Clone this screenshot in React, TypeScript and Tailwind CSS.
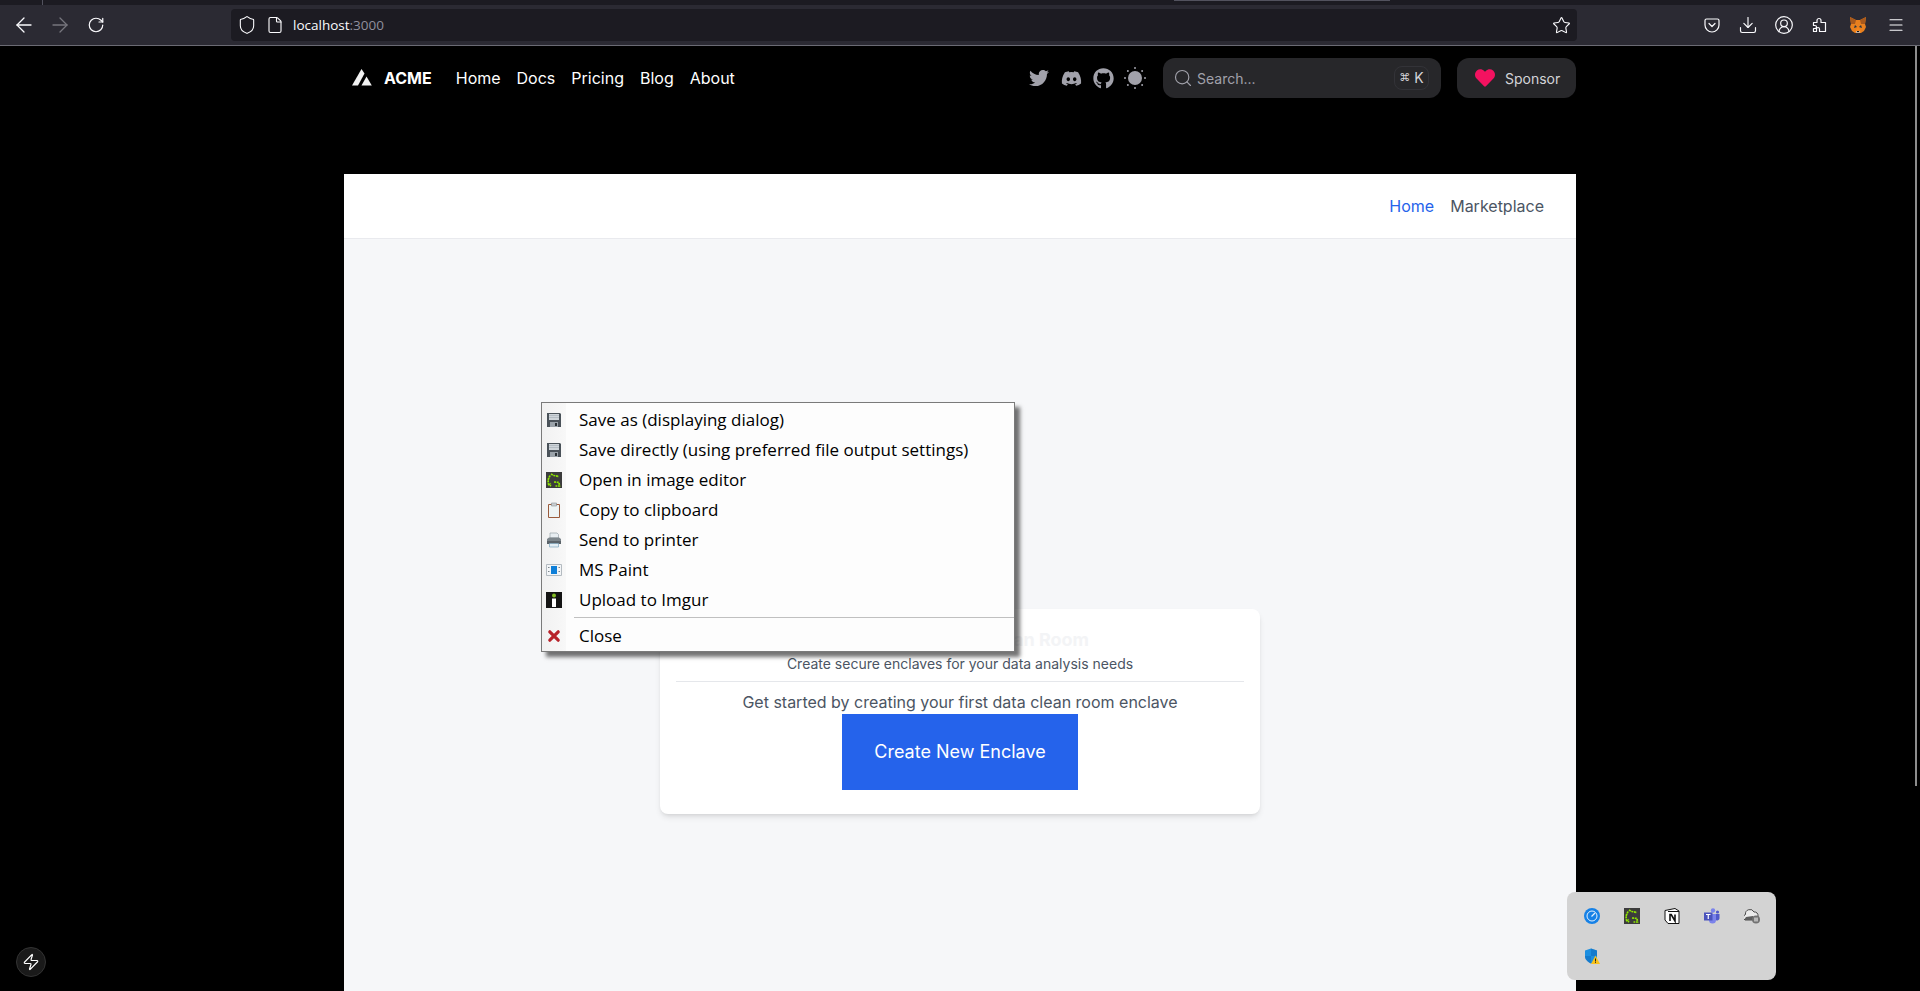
import { ArrowLeft, ArrowRight, CircleUserRound, Download, File, Menu, RotateCw, Search, Shield, Star, Zap } from 'lucide-react';
import { FaDiscord, FaGithub, FaHeart, FaTwitter } from 'react-icons/fa';

const navLinks = ['Home', 'Docs', 'Pricing', 'Blog', 'About'];

function PocketIcon() {
  return (
    <svg width="16" height="16" viewBox="0 0 16 16" fill="none" stroke="#fbfbfe" strokeWidth="1.2">
      <path d="M2.5 2h11A1.5 1.500 0 0 1 15 3.500V8a7 7 0 0 1-14 0V3.500A1.500 1.500 0 0 1 2.500 2z" />
      <path d="M5 6.500 8 9.500l3-3" strokeLinecap="round" strokeLinejoin="round" />
    </svg>
  );
}

function PuzzleIcon() {
  return (
    <svg width="16" height="16" viewBox="0 0 16 16" fill="none" stroke="#fbfbfe" strokeWidth="1.2" strokeLinejoin="round">
      <path d="M1.500 5.500h3.500V3.500a2 2 0 0 1 4 0v2h4.500v9H7.500v-2.500a1.500 1.500 0 0 0-3 0v2.500H1.500v-3h1.500a1.500 1.500 0 0 0 0-3H1.500z" />
    </svg>
  );
}

function FoxIcon() {
  return (
    <svg width="18" height="18" viewBox="0 0 18 18">
      <path d="M1 1l6 3h4l6-3-1 7 1 3-2 4-3 2H6l-3-2-2-4 1-3z" fill="#e8801f" />
      <path d="M1 1l6 3-1 4-4 0zM17 1l-6 3 1 4 4 0z" fill="#a8591c" />
      <path d="M6 9l2 2-3 1zM12 9l-2 2 3 1z" fill="#233447" />
      <path d="M6 15l3-4 3 4-1 2H7z" fill="#f6851b" />
      <path d="M7 15h4v2H7z" fill="#c0ad9e" />
      <path d="M8 15h2v1H8z" fill="#161616" />
    </svg>
  );
}

function AcmeLogo() {
  return (
    <svg width="20" height="18" viewBox="0 0 20 18" fill="#f2f2f2" className="-mt-0.5">
      <path d="M0 17.500 9.500 1 12.500 5.500 6 17.500z" />
      <path d="M14.500 8.500 19.800 17.500H9.500z" />
    </svg>
  );
}

function SunIcon() {
  return (
    <svg width="24" height="24" viewBox="0 0 24 24" fill="#a1a1aa">
      <circle cx="12" cy="12" r="7" />
      <circle cx="12" cy="2" r="1" />
      <circle cx="12" cy="22" r="1" />
      <circle cx="2" cy="12" r="1" />
      <circle cx="22" cy="12" r="1" />
      <circle cx="4.900" cy="4.900" r="1" />
      <circle cx="19.100" cy="4.900" r="1" />
      <circle cx="4.900" cy="19.100" r="1" />
      <circle cx="19.100" cy="19.100" r="1" />
    </svg>
  );
}

function FloppyIcon() {
  return (
    <svg width="16" height="16" viewBox="0 0 16 16">
      <path d="M1 1h13l1 1v13H1z" fill="#4a5259" />
      <path d="M3 2h10v6H3z" fill="#cfd5da" />
      <path d="M3 3.500h10M3 5.500h10" stroke="#b4bcc3" />
      <path d="M4 10h8v5H4z" fill="#9aa2a9" />
      <path d="M9 11h2v3H9z" fill="#2b3136" />
    </svg>
  );
}

function GreenshotIcon() {
  return (
    <svg width="16" height="16" viewBox="0 0 16 16">
      <path d="M0 0h16v16H0z" fill="#3c3c3c" />
      <path d="M5 2l3 1.500 5 1M4 3.500 2 8l.5 4 2.500 2M2 13l3-1.500M8 10l5 .5 .5 3.500-4 0" fill="none" stroke="#8fe800" strokeWidth="1.700" strokeDasharray="2 0.700" />
    </svg>
  );
}

function ClipboardIcon() {
  return (
    <svg width="16" height="16" viewBox="0 0 16 16">
      <path d="M2.500 2.500h11v13h-11z" fill="#eef4f4" stroke="#9a5b3c" />
      <path d="M5.500 1h5v3h-5z" fill="#c9cfd2" stroke="#8a9094" strokeWidth="0.600" />
    </svg>
  );
}

function PrinterIcon() {
  return (
    <svg width="16" height="16" viewBox="0 0 16 16">
      <path d="M4 1h7l1.500 1.500V6H4z" fill="#e8eef2" stroke="#9aa4ab" strokeWidth="0.700" />
      <path d="M1 7l2-1.500h10L15 7v5H1z" fill="#7d868c" />
      <path d="M1 9h14v3H1z" fill="#5b6369" />
      <path d="M3.500 11.500h9v3.500h-9z" fill="#e4eff5" stroke="#7fa6bd" strokeWidth="0.700" />
    </svg>
  );
}

function PaintIcon() {
  return (
    <svg width="16" height="16" viewBox="0 0 16 16">
      <path d="M0.500 2.500h15v11H0.500z" fill="#f3f5f7" stroke="#b4bbc1" />
      <path d="M5 4h6v8H5z" fill="#0f7fd8" />
      <path d="M2 5h1.500v1H2zM2 9h1.500v1H2zM12.500 5H14v1h-1.500zM12.500 9H14v1h-1.500z" fill="#7d868c" />
    </svg>
  );
}

function ImgurIcon() {
  return (
    <svg width="16" height="16" viewBox="0 0 16 16">
      <path d="M0 0h16v16H0z" fill="#141414" />
      <circle cx="8" cy="3.500" r="2" fill="#85bf25" />
      <path d="M6 6.500h4V15H6z" fill="#ffffff" />
    </svg>
  );
}

function CloseIcon() {
  return (
    <svg width="16" height="16" viewBox="0 0 16 16">
      <path d="M3.800 3.800l8.400 8.400M12.200 3.800l-8.400 8.400" stroke="#b8232a" strokeWidth="3.200" strokeLinecap="round" />
    </svg>
  );
}

function SpeedIcon() {
  return (
    <svg width="16" height="16" viewBox="0 0 16 16">
      <circle cx="8" cy="8" r="8" fill="#1681e6" />
      <circle cx="8" cy="8" r="5" fill="none" stroke="#e5f1fc" strokeWidth="1" />
      <path d="M7.500 8.500 11 5" stroke="#e5f1fc" strokeWidth="1.200" />
    </svg>
  );
}

function NotionIcon() {
  return (
    <svg width="16" height="16" viewBox="0 0 16 16">
      <path d="M1 2.500 11 .5l4 2.500v12.500H4L1 12z" fill="#ffffff" stroke="#111111" />
      <path d="M4 3.500h11" stroke="#111111" />
      <path d="M6 13V6.500h1.200L11 13V6.500" fill="none" stroke="#111111" strokeWidth="1.600" />
    </svg>
  );
}

function TeamsIcon() {
  return (
    <svg width="16" height="16" viewBox="0 0 16 16">
      <circle cx="9" cy="2.500" r="2.200" fill="#7b83eb" />
      <circle cx="13.500" cy="4" r="1.600" fill="#5059c9" />
      <path d="M11 6h4.500v4.500a2.500 2.500 0 0 1-4.500 1z" fill="#5059c9" />
      <path d="M5 6h7v6a3.500 3.500 0 0 1-7 0z" fill="#7b83eb" />
      <path d="M0 4.500h8.500v8H0z" fill="#4b53bc" />
      <path d="M2 6.500h4.500M4.250 6.500v4.500" stroke="#ffffff" strokeWidth="1.200" />
    </svg>
  );
}

function CloudIcon() {
  return (
    <svg width="16" height="16" viewBox="0 0 16 16">
      <path d="M1 12a3 3 0 0 1 .5-5.500A4.500 4.500 0 0 1 10 4a3.500 3.500 0 0 1 4 4v4z" fill="#ececec" stroke="#4a4a4a" />
      <path d="M1 12a3 3 0 0 1 1-3l7-1v4z" fill="#5e5e5e" />
      <circle cx="12" cy="11.500" r="4" fill="#727272" />
      <path d="M11 9.500v4M13 9.500v4" stroke="#ffffff" />
    </svg>
  );
}

function DefenderIcon() {
  return (
    <svg width="16" height="16" viewBox="0 0 16 16">
      <path d="M1 2.500 7 .5l6 2v6c0 3-3 5.500-6 7-3-1.500-6-4-6-7z" fill="#1d8fe0" />
      <path d="M7 .5v15c-3-1.500-6-4-6-7V8h12V2.500z" fill="#0f6cbd" opacity="0.550" />
      <path d="M11.500 7.500 16 16H7z" fill="#f9c21a" />
      <path d="M11.500 10.500v3M11.500 14.200v.8" stroke="#222222" strokeWidth="1" />
    </svg>
  );
}

const menuItems = [
  { label: 'Save as (displaying dialog)', icon: FloppyIcon },
  { label: 'Save directly (using preferred file output settings)', icon: FloppyIcon },
  { label: 'Open in image editor', icon: GreenshotIcon },
  { label: 'Copy to clipboard', icon: ClipboardIcon },
  { label: 'Send to printer', icon: PrinterIcon },
  { label: 'MS Paint', icon: PaintIcon },
  { label: 'Upload to Imgur', icon: ImgurIcon },
];

const trayIcons = [SpeedIcon, GreenshotIcon, NotionIcon, TeamsIcon, CloudIcon, DefenderIcon];

function BrowserBar() {
  return (
    <div className="flex-none font-['Open_Sans',sans-serif]">
      <div className="relative h-[5px] bg-[#1c1b22]">
        <div className="absolute left-[42px] top-0 h-[5px] w-px bg-[#52525e]" />
        <div className="absolute left-[1174px] top-0 h-px w-[216px] bg-[#52525e]" />
      </div>
      <div className="flex h-[41px] items-start border-b border-[#6b6b74] bg-[#2b2a33] pl-[6px]">
        <div className="flex h-10 w-9 items-center justify-center"><ArrowLeft size={24} strokeWidth={1.3} color="#fbfbfe" /></div>
        <div className="flex h-10 w-9 items-center justify-center"><ArrowRight size={24} strokeWidth={1.3} color="#77767e" /></div>
        <div className="flex h-10 w-9 items-center justify-center"><RotateCw size={18} strokeWidth={1.6} color="#fbfbfe" /></div>
        <div className="ml-[117px] mt-1 flex h-8 w-[1346px] items-center rounded bg-[#1c1b22] pl-[6px] pr-[6px]">
          <Shield size={20} strokeWidth={1.3} color="#fbfbfe" />
          <File size={18} strokeWidth={1.5} color="#fbfbfe" className="ml-[9px]" />
          <span className="ml-[9px] flex-1 text-[13.5px] text-[#fbfbfe]">localhost<span className="text-[#8f8f9d]">:3000</span></span>
          <Star size={19} strokeWidth={1.4} color="#fbfbfe" />
        </div>
        <div className="ml-[117px] flex h-10 w-9 items-center justify-center"><PocketIcon /></div>
        <div className="flex h-10 w-9 items-center justify-center"><Download size={20} strokeWidth={1.4} color="#fbfbfe" /></div>
        <div className="flex h-10 w-9 items-center justify-center"><CircleUserRound size={20} strokeWidth={1.4} color="#fbfbfe" /></div>
        <div className="flex h-10 w-9 items-center justify-center"><PuzzleIcon /></div>
        <div className="ml-[2px] flex h-10 w-9 items-center justify-center"><FoxIcon /></div>
        <div className="ml-[2px] flex h-10 w-9 items-center justify-center"><Menu size={18} strokeWidth={1.500} color="#fbfbfe" /></div>
      </div>
    </div>
  );
}

function Navbar() {
  return (
    <nav className="flex h-16 flex-none items-center justify-between pl-2">
      <div className="flex items-center">
        <AcmeLogo />
        <span className="ml-3 text-base font-bold text-white">ACME</span>
        <div className="ml-6 flex items-center gap-4">
          {navLinks.map((label) => (
            <span key={label} className="text-base text-white">{label}</span>
          ))}
        </div>
      </div>
      <div className="flex items-center gap-4">
        <div className="flex items-center gap-2 text-[#a1a1aa]">
          <div className="flex h-6 w-6 items-center justify-center"><FaTwitter size={20} /></div>
          <div className="flex h-6 w-6 items-center justify-center"><FaDiscord size={21} /></div>
          <div className="flex h-6 w-6 items-center justify-center"><FaGithub size={21} /></div>
          <SunIcon />
        </div>
        <div className="flex h-10 w-[278px] items-center rounded-xl bg-[#27272a] pl-[10px] pr-3">
          <Search size={20} strokeWidth={1.4} color="#a1a1aa" />
          <span className="ml-1 flex-1 pt-px text-sm text-[#a1a1aa]">Search...</span>
          <span className="flex h-6 w-[35px] items-center justify-center gap-1 rounded-lg border border-[#333338] text-sm text-[#d4d4d8]"><span className="text-[11px]">⌘</span>K</span>
        </div>
        <div className="flex h-10 w-[119px] items-center rounded-xl bg-[#27272a] pl-[18px]">
          <FaHeart size={20} color="#f31260" />
          <span className="ml-[10px] pt-px text-sm text-[#d4d4d8]">Sponsor</span>
        </div>
      </div>
    </nav>
  );
}

function ContextMenu() {
  return (
    <div className="absolute left-[541px] top-[402px] w-[474px] border border-[#7a7a7a] bg-[#fdfdfd] pt-[2px] font-['Open_Sans',sans-serif] shadow-[5px_5px_4px_rgba(0,0,0,0.55)]">
      <div className="absolute bottom-0 left-0 top-0 w-6 bg-gradient-to-r from-[#f1f1f1] to-[#f8f8f8]" />
      {menuItems.map(({ label, icon: Icon }) => (
        <div key={label} className="relative flex h-[30px] items-center pl-[4px]">
          <Icon />
          <span className="ml-[17px] text-[17px] text-black">{label}</span>
        </div>
      ))}
      <div className="relative mb-[3px] ml-8 mt-[2px] h-px bg-[#c0c0c0]" />
      <div className="relative flex h-[30px] items-center pl-[4px]">
        <CloseIcon />
        <span className="ml-[17px] text-[17px] text-black">Close</span>
      </div>
    </div>
  );
}

export default function App() {
  return (
    <div className="relative flex h-[991px] flex-col overflow-hidden bg-black font-['Inter',sans-serif]">
      <BrowserBar />
      <div className="mx-auto flex w-[1232px] flex-1 flex-col">
        <Navbar />
        <main className="mt-16 flex flex-1 flex-col bg-[#f6f7f9]">
          <header className="flex h-[65px] flex-none items-center justify-end gap-4 border-b border-[#e9eaee] bg-white pr-8">
            <span className="text-base text-[#2563eb]">Home</span>
            <span className="text-base text-[#4b5563]">Marketplace</span>
          </header>
          <div className="flex justify-center pt-[370px]">
            <div className="flex w-[600px] flex-col items-center rounded-lg bg-white px-4 pb-6 pt-[17px] shadow-md">
              <h1 className="text-lg font-bold text-[#f3f4f6]">Welcome to Data Clean Room</h1>
              <p className="text-sm text-[#4b5563]">Create secure enclaves for your data analysis needs</p>
              <div className="mb-2 mt-[7px] h-px w-full bg-[#e5e7eb]" />
              <p className="text-base text-[#4b5563]">Get started by creating your first data clean room enclave</p>
              <button className="w-[236px] bg-[#2563eb] py-6 text-lg text-white">Create New Enclave</button>
            </div>
          </div>
        </main>
      </div>

      <ContextMenu />

      <div className="absolute left-[1567px] top-[892px] grid w-[209px] grid-cols-[repeat(5,40px)] rounded-lg bg-[#d3d3d3] pb-1 pl-[5px] pt-1">
        {trayIcons.map((Icon, i) => (
          <div key={i} className="flex h-10 w-10 items-center justify-center"><Icon /></div>
        ))}
      </div>

      <div className="absolute left-4 top-[947px] flex h-[30px] w-[30px] items-center justify-center rounded-full border border-[#333333] bg-[#1a1a1a]">
        <Zap size={18} strokeWidth={1.6} color="#ffffff" />
      </div>

      <div className="absolute right-[3px] top-[46px] h-[740px] w-[2px] bg-[#8d8d8d]" />
    </div>
  );
}
